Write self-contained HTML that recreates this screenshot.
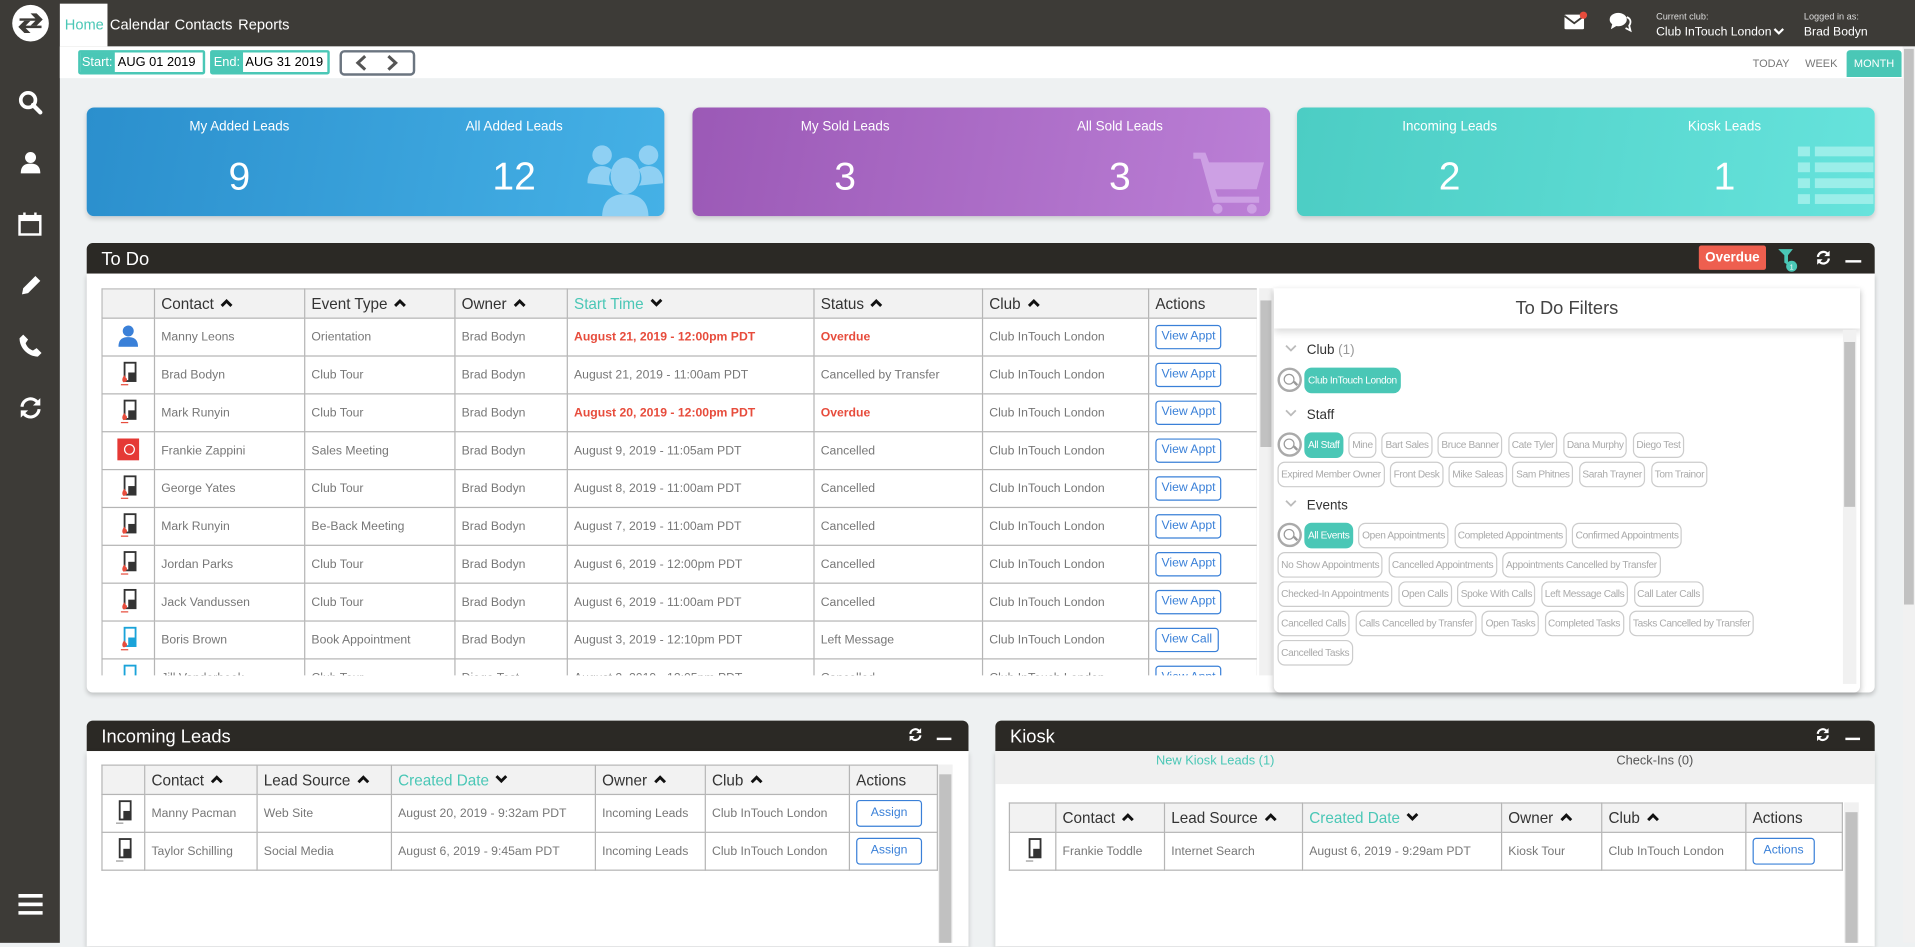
<!DOCTYPE html>
<html><head><meta charset="utf-8"><style>
*{box-sizing:border-box;margin:0;padding:0}
html,body{width:1915px;height:943px;overflow:hidden;background:#eef1f2;font-family:"Liberation Sans",sans-serif}
#w{position:absolute;left:0;top:0;width:1568px;height:772px;transform:scale(1.22130);transform-origin:0 0;background:#eef1f2}
.a{position:absolute}
.top{left:0;top:0;width:1568px;height:38px;background:#3d3b37}
.side{left:0;top:0;width:49px;height:772px;background:#3d3b37}
.nav{top:13px;color:#fff;font-size:12px}
.sub{left:49px;top:38px;width:1509px;height:26px;background:#fff}
.card{border-radius:6px;box-shadow:0 2px 4px rgba(0,0,0,.15);color:#fff;height:89px;top:88px;width:473px;overflow:hidden}
.card .l{position:absolute;top:10px;font-size:11px;width:200px;text-align:center}
.card .n{position:absolute;top:38px;font-size:32px;width:200px;text-align:center}
.ph{background:#2b2925;color:#fff;font-size:15px;height:25px;border-radius:5px 5px 0 0;padding:5px 12px}
.pb{background:#fff;box-shadow:0 2px 4px rgba(0,0,0,.2);border-radius:0 0 5px 5px}
table{border-collapse:collapse;table-layout:fixed}
td,th{border:1px solid #b5b5b5;font-size:10px;color:#777;padding:0 5px;white-space:nowrap;overflow:hidden;height:31px;text-align:left;font-weight:normal}
th{background:#f2f2f2;color:#333;font-size:12.5px;height:24px}
th.t{color:#4ac7b6}
.cu,.cd{display:inline-block;width:11px;height:8px;margin-left:5px;vertical-align:1px}
.cu{background:url() }
.btn{display:inline-block;border:1px solid #3a80d8;color:#3a80d8;border-radius:3px;padding:4px 4px;font-size:10px;line-height:10px;vertical-align:middle}
.red{color:#e74c3c;font-weight:bold}
.chip{display:inline-block;border:1px solid #ccc;color:#aaa;border-radius:6px;font-size:8.3px;padding:5px 2px;margin:0 0 3px 0;line-height:9px;letter-spacing:-.3px}
.chip.on{background:#4ac7b6;border-color:#4ac7b6;color:#fff}
.mag{display:inline-block;width:20px;height:20px;border:2px solid #aaa;border-radius:50%;vertical-align:top;margin-right:2px;position:relative}
.mag:after{content:"";position:absolute;left:3px;top:3px;width:7px;height:7px;border:1.5px solid #999;border-radius:50%}
.mag:before{content:"";position:absolute;left:11px;top:10px;width:4px;height:1.5px;background:#999;transform:rotate(45deg)}
.fh{font-size:11px;color:#333;margin:6px 0 8px 6px}
.sb{background:#f1f1f1}
.sb i{position:absolute;left:1px;right:1px;background:#c1c1c1}
</style></head><body><div id="w">
<svg width="0" height="0" style="position:absolute"><defs>
<symbol id="up" viewBox="0 0 11 8"><path d="M1.5 6.5l4-4 4 4" fill="none" stroke="#111" stroke-width="2.4"/></symbol>
<symbol id="dn" viewBox="0 0 11 8"><path d="M1.5 1.5l4 4 4-4" fill="none" stroke="#111" stroke-width="2.4"/></symbol>
<symbol id="fc" viewBox="0 0 10 6"><path d="M1 1l4 4 4-4" fill="none" stroke="#bbb" stroke-width="1.5"/></symbol>
</defs></svg>
<div class="a top"></div>
<div class="a side"></div>
<svg class="a" style="left:9px;top:3px" width="32" height="32" viewBox="0 0 32 32"><circle cx="16" cy="16" r="15" fill="#fff"/><path d="M7 12h13l-4-4h5l5 5-5 5h-5l4-4H7z" fill="#3d3b37"/><path d="M25 20H12l4 4h-5l-5-5 5-5h5l-4 4h13z" fill="#3d3b37"/></svg>
<div class="a" style="left:49px;top:3px;width:39px;height:35px;background:#fff"></div>
<div class="a nav" style="left:53px;color:#4ac7b6">Home</div>
<div class="a nav" style="left:90px">Calendar</div>
<div class="a nav" style="left:143px">Contacts</div>
<div class="a nav" style="left:195px">Reports</div>
<svg class="a" style="left:14px;top:73px" width="22" height="22" viewBox="0 0 22 22"><circle cx="9" cy="9" r="6" fill="none" stroke="#fff" stroke-width="3"/><path d="M13 13l6 6" stroke="#fff" stroke-width="3.5" stroke-linecap="round"/></svg>
<svg class="a" style="left:15px;top:123px" width="20" height="20" viewBox="0 0 20 20"><circle cx="10" cy="6" r="4.5" fill="#fff"/><path d="M2 19c0-6 3-8 8-8s8 2 8 8z" fill="#fff"/></svg>
<svg class="a" style="left:14px;top:173px" width="22" height="22" viewBox="0 0 22 22"><rect x="2" y="4" width="17" height="15" fill="none" stroke="#fff" stroke-width="2"/><rect x="2" y="4" width="17" height="4" fill="#fff"/><rect x="5" y="1" width="2" height="5" fill="#fff"/><rect x="14" y="1" width="2" height="5" fill="#fff"/></svg>
<svg class="a" style="left:15px;top:224px" width="20" height="20" viewBox="0 0 20 20"><path d="M3 17l1-5L14 2l4 4L8 16z" fill="#fff"/></svg>
<svg class="a" style="left:15px;top:273px" width="20" height="20" viewBox="0 0 20 20"><path d="M4 1l4 4-2 3c1 3 3 5 6 6l3-2 4 4-3 3C8 19 1 12 1 4z" fill="#fff"/></svg>
<svg class="a" style="left:14px;top:323px" width="22" height="22" viewBox="0 0 22 22"><path d="M4 10a7 7 0 0 1 13-3" fill="none" stroke="#fff" stroke-width="2.5"/><path d="M19 3v6h-6z" fill="#fff"/><path d="M18 12a7 7 0 0 1-13 3" fill="none" stroke="#fff" stroke-width="2.5"/><path d="M3 19v-6h6z" fill="#fff"/></svg>
<svg class="a" style="left:15px;top:731px" width="20" height="18" viewBox="0 0 20 18"><rect y="1" width="20" height="3" fill="#fff"/><rect y="8" width="20" height="3" fill="#fff"/><rect y="15" width="20" height="3" fill="#fff"/></svg>
<svg class="a" style="left:1280px;top:9px" width="20" height="16" viewBox="0 0 20 16"><rect x="1" y="3" width="16" height="12" rx="1" fill="#fff"/><path d="M1 4l8 6 8-6" fill="none" stroke="#3d3b37" stroke-width="1.5"/><circle cx="16.5" cy="3.5" r="3" fill="#e74c3c"/></svg>
<svg class="a" style="left:1317px;top:9px" width="20" height="18" viewBox="0 0 20 18"><ellipse cx="8" cy="7" rx="7" ry="5.5" fill="#fff"/><path d="M3 11l-1 4 5-3z" fill="#fff"/><path d="M15 5c3 1 4 4 2 7l1 4-4-2" fill="none" stroke="#fff" stroke-width="1.5"/></svg>
<div class="a" style="left:1356px;top:9px;font-size:7.5px;color:#ddd">Current club:</div>
<div class="a" style="left:1356px;top:21px;font-size:10px;color:#fff">Club InTouch London<svg width="9" height="7" viewBox="0 0 10 6" style="margin-left:1px"><path d="M1 1l4 4 4-4" fill="none" stroke="#fff" stroke-width="2"/></svg></div>
<div class="a" style="left:1477px;top:9px;font-size:7.5px;color:#ddd">Logged in as:</div>
<div class="a" style="left:1477px;top:21px;font-size:10px;color:#fff">Brad Bodyn</div>
<div class="a sub"></div>
<div class="a" style="left:64px;top:41px;width:104px;height:20px;border:2px solid #4ac7b6;border-radius:2px;font-size:10.5px;line-height:16px"><span style="background:#4ac7b6;color:#fff;padding:2px 2px 2px 1px">Start:</span> AUG 01 2019</div>
<div class="a" style="left:172px;top:41px;width:98px;height:20px;border:2px solid #4ac7b6;border-radius:2px;font-size:10.5px;line-height:16px"><span style="background:#4ac7b6;color:#fff;padding:2px 2px 2px 1px">End:</span> AUG 31 2019</div>
<div class="a" style="left:278px;top:41px;width:62px;height:21px;border:2px solid #6b7580;border-radius:4px"><svg width="58" height="17" viewBox="0 0 58 17"><path d="M19 3l-6 5.5 6 5.5M38 3l6 5.5-6 5.5" fill="none" stroke="#555" stroke-width="2.5"/></svg></div>
<div class="a" style="left:1435px;top:47px;font-size:9px;color:#777">TODAY</div>
<div class="a" style="left:1478px;top:47px;font-size:9px;color:#777">WEEK</div>
<div class="a" style="left:1512px;top:41px;width:45px;height:22px;background:#4ac7b6;color:#fff;font-size:9px;text-align:center;line-height:22px;border-radius:3px 3px 0 0">MONTH</div>
<div class="a sb" style="left:1558px;top:38px;width:10px;height:734px"><i style="top:2px;height:455px"></i></div>
<div class="a card" style="left:71px;background:linear-gradient(100deg,#2b8fcd,#45b1e6)"><div class="l" style="left:25px">My Added Leads</div><div class="l" style="left:250px">All Added Leads</div><div class="n" style="left:25px">9</div><div class="n" style="left:250px">12</div>
<svg class="a" style="left:410px;top:30px" width="62" height="60" viewBox="0 0 62 60"><g fill="#8fd0f3"><circle cx="12" cy="9" r="8"/><circle cx="50" cy="9" r="8"/><ellipse cx="31" cy="26" rx="12" ry="15"/><path d="M0 32c0-10 5-14 12-14 5 0 8 3 8 3-3 4-3 10 0 13z"/><path d="M62 32c0-10-5-14-12-14-5 0-8 3-8 3 3 4 3 10 0 13z"/><path d="M12 60c0-14 8-19 19-19s19 5 19 19z"/></g></svg></div>
<div class="a card" style="left:567px;background:linear-gradient(100deg,#9b59b6,#bb7fd6)"><div class="l" style="left:25px">My Sold Leads</div><div class="l" style="left:250px">All Sold Leads</div><div class="n" style="left:25px">3</div><div class="n" style="left:250px">3</div>
<svg class="a" style="left:410px;top:35px" width="58" height="52" viewBox="0 0 58 52"><g fill="#cda0e4"><path d="M0 2h10l3 8h45l-6 22H18l2 6h34v5H16L6 7H0z"/><circle cx="20" cy="48" r="4"/><circle cx="48" cy="48" r="4"/></g></svg></div>
<div class="a card" style="left:1062px;background:linear-gradient(100deg,#4ccdc4,#66e3dc)"><div class="l" style="left:25px">Incoming Leads</div><div class="l" style="left:250px">Kiosk Leads</div><div class="n" style="left:25px">2</div><div class="n" style="left:250px">1</div>
<svg class="a" style="left:410px;top:32px" width="62" height="50" viewBox="0 0 62 50"><g fill="#9beee9"><rect x="0" y="0" width="10" height="8"/><rect x="14" y="0" width="48" height="8"/><rect x="0" y="13" width="10" height="8"/><rect x="14" y="13" width="48" height="8"/><rect x="0" y="26" width="10" height="8"/><rect x="14" y="26" width="48" height="8"/><rect x="0" y="39" width="10" height="8"/><rect x="14" y="39" width="48" height="8"/></g></svg></div>
<div class="a ph" style="left:71px;top:199px;width:1464px">To Do</div>
<div class="a" style="left:1391px;top:201px;width:55px;height:20px;background:#ee5f4f;color:#fff;font-size:11px;font-weight:bold;text-align:center;line-height:20px;border-radius:2px">Overdue</div>
<svg class="a" style="left:1455px;top:203px" width="20" height="20" viewBox="0 0 20 20"><path d="M1 1h12l-4 5v8l-3-2V6z" fill="#4ac7b6"/><circle cx="12" cy="15" r="4.5" fill="#4ac7b6"/><text x="12" y="17.5" font-size="6" fill="#fff" text-anchor="middle" font-family="Liberation Sans">1</text></svg>
<svg class="a" style="left:1486px;top:204px" width="14" height="14" viewBox="0 0 22 22"><path d="M4 10a7 7 0 0 1 13-3" fill="none" stroke="#fff" stroke-width="3"/><path d="M19 2v7h-7z" fill="#fff"/><path d="M18 12a7 7 0 0 1-13 3" fill="none" stroke="#fff" stroke-width="3"/><path d="M3 20v-7h7z" fill="#fff"/></svg>
<div class="a" style="left:1511px;top:213px;width:13px;height:2px;background:#fff"></div>
<div class="a pb" style="left:71px;top:224px;width:1464px;height:343px"></div>
<div class="a" style="left:83px;top:236px;width:946px;height:317px;overflow:hidden">
<table style="width:946px">
<colgroup><col style="width:43px"><col style="width:123px"><col style="width:123px"><col style="width:92px"><col style="width:202px"><col style="width:138px"><col style="width:136px"><col style="width:89px"></colgroup>
<tr><th></th><th>Contact<svg class="cu"><use href="#up"/></svg></th><th>Event Type<svg class="cu"><use href="#up"/></svg></th><th>Owner<svg class="cu"><use href="#up"/></svg></th><th class="t">Start Time<svg class="cd"><use href="#dn"/></svg></th><th>Status<svg class="cu"><use href="#up"/></svg></th><th>Club<svg class="cu"><use href="#up"/></svg></th><th>Actions</th></tr>
<tr><td style="text-align:center"><svg width="16" height="18" viewBox="0 0 16 18"><circle cx="8" cy="5" r="4.5" fill="#3a80d8"/><path d="M0 18c0-6 3-8 8-8s8 2 8 8z" fill="#3a80d8"/></svg></td><td>Manny Leons</td><td>Orientation</td><td>Brad Bodyn</td><td class="red">August 21, 2019 - 12:00pm PDT</td><td class="red">Overdue</td><td>Club InTouch London</td><td><span class="btn">View Appt</span></td></tr>
<tr><td style="text-align:center"><svg width="14" height="20" viewBox="0 0 14 20"><rect x="4" y="1" width="9" height="15" fill="#fff" stroke="#333" stroke-width="1.5"/><rect x="7" y="9" width="6" height="7" fill="#333"/><path d="M3 17c-2-2 0-5 1-6 0 2 2 2 2 4 0 1-1 2-3 2z" fill="#e74c3c"/><rect x="1" y="18.5" width="6" height="1" fill="#e74c3c"/></svg></td><td>Brad Bodyn</td><td>Club Tour</td><td>Brad Bodyn</td><td>August 21, 2019 - 11:00am PDT</td><td>Cancelled by Transfer</td><td>Club InTouch London</td><td><span class="btn">View Appt</span></td></tr>
<tr><td style="text-align:center"><svg width="14" height="20" viewBox="0 0 14 20"><rect x="4" y="1" width="9" height="15" fill="#fff" stroke="#333" stroke-width="1.5"/><rect x="7" y="9" width="6" height="7" fill="#333"/><path d="M3 17c-2-2 0-5 1-6 0 2 2 2 2 4 0 1-1 2-3 2z" fill="#e74c3c"/><rect x="1" y="18.5" width="6" height="1" fill="#e74c3c"/></svg></td><td>Mark Runyin</td><td>Club Tour</td><td>Brad Bodyn</td><td class="red">August 20, 2019 - 12:00pm PDT</td><td class="red">Overdue</td><td>Club InTouch London</td><td><span class="btn">View Appt</span></td></tr>
<tr><td style="text-align:center"><svg width="18" height="18"><rect width="18" height="18" fill="#e53935"/><circle cx="10" cy="9" r="4" fill="none" stroke="#fff"/></svg></td><td>Frankie Zappini</td><td>Sales Meeting</td><td>Brad Bodyn</td><td>August 9, 2019 - 11:05am PDT</td><td>Cancelled</td><td>Club InTouch London</td><td><span class="btn">View Appt</span></td></tr>
<tr><td style="text-align:center"><svg width="14" height="20" viewBox="0 0 14 20"><rect x="4" y="1" width="9" height="15" fill="#fff" stroke="#333" stroke-width="1.5"/><rect x="7" y="9" width="6" height="7" fill="#333"/><path d="M3 17c-2-2 0-5 1-6 0 2 2 2 2 4 0 1-1 2-3 2z" fill="#e74c3c"/><rect x="1" y="18.5" width="6" height="1" fill="#e74c3c"/></svg></td><td>George Yates</td><td>Club Tour</td><td>Brad Bodyn</td><td>August 8, 2019 - 11:00am PDT</td><td>Cancelled</td><td>Club InTouch London</td><td><span class="btn">View Appt</span></td></tr>
<tr><td style="text-align:center"><svg width="14" height="20" viewBox="0 0 14 20"><rect x="4" y="1" width="9" height="15" fill="#fff" stroke="#333" stroke-width="1.5"/><rect x="7" y="9" width="6" height="7" fill="#333"/><path d="M3 17c-2-2 0-5 1-6 0 2 2 2 2 4 0 1-1 2-3 2z" fill="#e74c3c"/><rect x="1" y="18.5" width="6" height="1" fill="#e74c3c"/></svg></td><td>Mark Runyin</td><td>Be-Back Meeting</td><td>Brad Bodyn</td><td>August 7, 2019 - 11:00am PDT</td><td>Cancelled</td><td>Club InTouch London</td><td><span class="btn">View Appt</span></td></tr>
<tr><td style="text-align:center"><svg width="14" height="20" viewBox="0 0 14 20"><rect x="4" y="1" width="9" height="15" fill="#fff" stroke="#333" stroke-width="1.5"/><rect x="7" y="9" width="6" height="7" fill="#333"/><path d="M3 17c-2-2 0-5 1-6 0 2 2 2 2 4 0 1-1 2-3 2z" fill="#e74c3c"/><rect x="1" y="18.5" width="6" height="1" fill="#e74c3c"/></svg></td><td>Jordan Parks</td><td>Club Tour</td><td>Brad Bodyn</td><td>August 6, 2019 - 12:00pm PDT</td><td>Cancelled</td><td>Club InTouch London</td><td><span class="btn">View Appt</span></td></tr>
<tr><td style="text-align:center"><svg width="14" height="20" viewBox="0 0 14 20"><rect x="4" y="1" width="9" height="15" fill="#fff" stroke="#333" stroke-width="1.5"/><rect x="7" y="9" width="6" height="7" fill="#333"/><path d="M3 17c-2-2 0-5 1-6 0 2 2 2 2 4 0 1-1 2-3 2z" fill="#e74c3c"/><rect x="1" y="18.5" width="6" height="1" fill="#e74c3c"/></svg></td><td>Jack Vandussen</td><td>Club Tour</td><td>Brad Bodyn</td><td>August 6, 2019 - 11:00am PDT</td><td>Cancelled</td><td>Club InTouch London</td><td><span class="btn">View Appt</span></td></tr>
<tr><td style="text-align:center"><svg width="14" height="20" viewBox="0 0 14 20"><rect x="4" y="1" width="9" height="15" fill="#fff" stroke="#1aa3d9" stroke-width="1.5"/><rect x="7" y="9" width="6" height="7" fill="#1aa3d9"/><path d="M3 17c-2-2 0-5 1-6 0 2 2 2 2 4 0 1-1 2-3 2z" fill="#e74c3c"/><rect x="1" y="18.5" width="6" height="1" fill="#e74c3c"/></svg></td><td>Boris Brown</td><td>Book Appointment</td><td>Brad Bodyn</td><td>August 3, 2019 - 12:10pm PDT</td><td>Left Message</td><td>Club InTouch London</td><td><span class="btn">View Call</span></td></tr>
<tr><td style="text-align:center"><svg width="14" height="20" viewBox="0 0 14 20"><rect x="4" y="1" width="9" height="15" fill="#fff" stroke="#1aa3d9" stroke-width="1.5"/></svg></td><td>Jill Vanderbeek</td><td>Club Tour</td><td>Diego Test</td><td>August 2, 2019 - 12:05pm PDT</td><td>Cancelled</td><td>Club InTouch London</td><td><span class="btn">View Appt</span></td></tr>
</table></div>
<div class="a sb" style="left:1031px;top:236px;width:11px;height:317px"><i style="top:10px;height:120px"></i></div>
<div class="a" style="left:1043px;top:236px;width:480px;height:331px;background:#fff;box-shadow:0 2px 5px rgba(0,0,0,.25);border-radius:0 0 5px 5px;overflow:hidden">
<div style="height:33px;text-align:center;font-size:15px;color:#444;line-height:33px;box-shadow:0 3px 6px rgba(0,0,0,.15);position:relative">To Do Filters</div>
<div style="padding:6px 18px 0 3px">
<div class="fh"><svg width="10" height="6" style="margin-right:8px;vertical-align:2px"><use href="#fc"/></svg>Club <span style="color:#999">(1)</span></div>
<div><span class="mag"></span><span class="chip on">Club InTouch London</span></div>
<div class="fh" style="margin-top:9px"><svg width="10" height="6" style="margin-right:8px;vertical-align:2px"><use href="#fc"/></svg>Staff</div>
<div><span class="mag"></span><span class="chip on">All Staff</span> <span class="chip">Mine</span> <span class="chip">Bart Sales</span> <span class="chip">Bruce Banner</span> <span class="chip">Cate Tyler</span> <span class="chip">Dana Murphy</span> <span class="chip">Diego Test</span><br><span class="chip">Expired Member Owner</span> <span class="chip">Front Desk</span> <span class="chip">Mike Saleas</span> <span class="chip">Sam Phitnes</span> <span class="chip">Sarah Trayner</span> <span class="chip">Tom Trainor</span></div>
<div class="fh" style="margin-top:6px"><svg width="10" height="6" style="margin-right:8px;vertical-align:2px"><use href="#fc"/></svg>Events</div>
<div><span class="mag"></span><span class="chip on">All Events</span> <span class="chip">Open Appointments</span> <span class="chip">Completed Appointments</span> <span class="chip">Confirmed Appointments</span><br><span class="chip">No Show Appointments</span> <span class="chip">Cancelled Appointments</span> <span class="chip">Appointments Cancelled by Transfer</span><br><span class="chip">Checked-In Appointments</span> <span class="chip">Open Calls</span> <span class="chip">Spoke With Calls</span> <span class="chip">Left Message Calls</span> <span class="chip">Call Later Calls</span><br><span class="chip">Cancelled Calls</span> <span class="chip">Calls Cancelled by Transfer</span> <span class="chip">Open Tasks</span> <span class="chip">Completed Tasks</span> <span class="chip">Tasks Cancelled by Transfer</span><br><span class="chip">Cancelled Tasks</span></div>
</div>
<div class="a sb" style="left:466px;top:34px;width:11px;height:290px"><i style="top:10px;height:135px"></i></div>
</div>
<div class="a ph" style="left:71px;top:590px;width:722px">Incoming Leads</div>
<svg class="a" style="left:743px;top:595px" width="13" height="13" viewBox="0 0 22 22"><path d="M4 10a7 7 0 0 1 13-3" fill="none" stroke="#fff" stroke-width="3"/><path d="M19 2v7h-7z" fill="#fff"/><path d="M18 12a7 7 0 0 1-13 3" fill="none" stroke="#fff" stroke-width="3"/><path d="M3 20v-7h7z" fill="#fff"/></svg>
<div class="a" style="left:767px;top:604px;width:12px;height:2px;background:#fff"></div>
<div class="a pb" style="left:71px;top:615px;width:722px;height:160px;border-radius:0"></div>
<div class="a" style="left:83px;top:626px"><table style="width:684px">
<colgroup><col style="width:35px"><col style="width:92px"><col style="width:110px"><col style="width:167px"><col style="width:90px"><col style="width:118px"><col style="width:72px"></colgroup>
<tr><th></th><th>Contact<svg class="cu"><use href="#up"/></svg></th><th>Lead Source<svg class="cu"><use href="#up"/></svg></th><th class="t">Created Date<svg class="cd"><use href="#dn"/></svg></th><th>Owner<svg class="cu"><use href="#up"/></svg></th><th>Club<svg class="cu"><use href="#up"/></svg></th><th>Actions</th></tr>
<tr><td style="text-align:center"><svg width="14" height="20" viewBox="0 0 14 20"><rect x="4" y="1" width="9" height="15" fill="#fff" stroke="#333" stroke-width="1.5"/><rect x="7" y="9" width="6" height="7" fill="#333"/><rect x="1" y="18.5" width="6" height="1" fill="#999"/></svg></td><td>Manny Pacman</td><td>Web Site</td><td>August 20, 2019 - 9:32am PDT</td><td>Incoming Leads</td><td>Club InTouch London</td><td><span class="btn" style="padding:5px 11px">Assign</span></td></tr>
<tr><td style="text-align:center"><svg width="14" height="20" viewBox="0 0 14 20"><rect x="4" y="1" width="9" height="15" fill="#fff" stroke="#333" stroke-width="1.5"/><rect x="7" y="9" width="6" height="7" fill="#333"/><rect x="1" y="18.5" width="6" height="1" fill="#999"/></svg></td><td>Taylor Schilling</td><td>Social Media</td><td>August 6, 2019 - 9:45am PDT</td><td>Incoming Leads</td><td>Club InTouch London</td><td><span class="btn" style="padding:5px 11px">Assign</span></td></tr>
</table></div>
<div class="a sb" style="left:768px;top:626px;width:12px;height:146px"><i style="top:8px;height:138px"></i></div>
<div class="a ph" style="left:815px;top:590px;width:720px">Kiosk</div>
<svg class="a" style="left:1486px;top:595px" width="13" height="13" viewBox="0 0 22 22"><path d="M4 10a7 7 0 0 1 13-3" fill="none" stroke="#fff" stroke-width="3"/><path d="M19 2v7h-7z" fill="#fff"/><path d="M18 12a7 7 0 0 1-13 3" fill="none" stroke="#fff" stroke-width="3"/><path d="M3 20v-7h7z" fill="#fff"/></svg>
<div class="a" style="left:1511px;top:604px;width:12px;height:2px;background:#fff"></div>
<div class="a pb" style="left:815px;top:615px;width:720px;height:160px;border-radius:0"></div>
<div class="a" style="left:815px;top:615px;width:720px;height:27px;background:#f0f0f0"></div>
<div class="a" style="left:815px;top:615px;width:360px;height:27px;text-align:center;font-size:10.5px;color:#4ac7b6;line-height:16px">New Kiosk Leads (1)</div>
<div class="a" style="left:1175px;top:615px;width:360px;height:27px;text-align:center;font-size:10.5px;color:#555;line-height:16px">Check-Ins (0)</div>
<div class="a" style="left:826px;top:657px"><table style="width:682px">
<colgroup><col style="width:38px"><col style="width:89px"><col style="width:113px"><col style="width:163px"><col style="width:82px"><col style="width:118px"><col style="width:79px"></colgroup>
<tr><th></th><th>Contact<svg class="cu"><use href="#up"/></svg></th><th>Lead Source<svg class="cu"><use href="#up"/></svg></th><th class="t">Created Date<svg class="cd"><use href="#dn"/></svg></th><th>Owner<svg class="cu"><use href="#up"/></svg></th><th>Club<svg class="cu"><use href="#up"/></svg></th><th>Actions</th></tr>
<tr><td style="text-align:center"><svg width="14" height="20" viewBox="0 0 14 20"><rect x="4" y="1" width="9" height="15" fill="#fff" stroke="#333" stroke-width="1.5"/><rect x="7" y="9" width="6" height="7" fill="#333"/><rect x="1" y="18.5" width="6" height="1" fill="#999"/></svg></td><td>Frankie Toddle</td><td>Internet Search</td><td>August 6, 2019 - 9:29am PDT</td><td>Kiosk Tour</td><td>Club InTouch London</td><td><span class="btn" style="padding:5px 8px">Actions</span></td></tr>
</table></div>
<div class="a sb" style="left:1510px;top:657px;width:12px;height:115px"><i style="top:8px;height:107px"></i></div>
</div></body></html>
